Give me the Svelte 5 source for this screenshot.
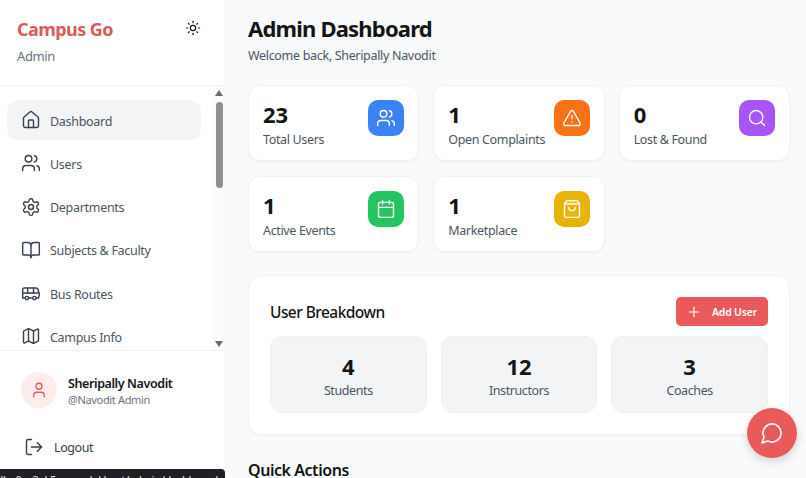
<script lang="ts">
const navItems = [
    { label: 'Dashboard', icon: 'home', active: true },
    { label: 'Users', icon: 'users' },
    { label: 'Departments', icon: 'gear' },
    { label: 'Subjects & Faculty', icon: 'book' },
    { label: 'Bus Routes', icon: 'bus' },
    { label: 'Campus Info', icon: 'map' },
];

const stats = [
    { value: 23, label: 'Total Users', color: '#3b82f6', icon: 'users' },
    { value: 1, label: 'Open Complaints', color: '#f97316', icon: 'alert' },
    { value: 0, label: 'Lost & Found', color: '#a855f7', icon: 'search' },
    { value: 1, label: 'Active Events', color: '#22c55e', icon: 'calendar' },
    { value: 1, label: 'Marketplace', color: '#eab308', icon: 'bag' },
];

const breakdown = [
    { value: 4, label: 'Students' },
    { value: 12, label: 'Instructors' },
    { value: 3, label: 'Coaches' },
];
</script>

{#snippet icon(name: string, size: number)}
    <svg width={size} height={size} viewBox="0 0 24 24" fill="none" stroke="currentColor" stroke-width="2" stroke-linecap="round" stroke-linejoin="round">
        {#if name === 'home'}
            <path d="M15 21v-8a1 1 0 0 0-1-1h-4a1 1 0 0 0-1 1v8" />
            <path d="M3 10a2 2 0 0 1 .709-1.528l7-5.999a2 2 0 0 1 2.582 0l7 5.999A2 2 0 0 1 21 10v9a2 2 0 0 1-2 2H5a2 2 0 0 1-2-2z" />
        {:else if name === 'users'}
            <path d="M16 21v-2a4 4 0 0 0-4-4H6a4 4 0 0 0-4 4v2" />
            <circle cx="9" cy="7" r="4" />
            <path d="M22 21v-2a4 4 0 0 0-3-3.87" />
            <path d="M16 3.13a4 4 0 0 1 0 7.75" />
        {:else if name === 'gear'}
            <path d="M12.22 2h-.44a2 2 0 0 0-2 2v.18a2 2 0 0 1-1 1.73l-.43.25a2 2 0 0 1-2 0l-.15-.08a2 2 0 0 0-2.73.73l-.22.38a2 2 0 0 0 .73 2.73l.15.1a2 2 0 0 1 1 1.72v.51a2 2 0 0 1-1 1.74l-.15.09a2 2 0 0 0-.73 2.73l.22.38a2 2 0 0 0 2.73.73l.15-.08a2 2 0 0 1 2 0l.43.25a2 2 0 0 1 1 1.73V20a2 2 0 0 0 2 2h.44a2 2 0 0 0 2-2v-.18a2 2 0 0 1 1-1.73l.43-.25a2 2 0 0 1 2 0l.15.08a2 2 0 0 0 2.73-.73l.22-.39a2 2 0 0 0-.73-2.73l-.15-.08a2 2 0 0 1-1-1.74v-.5a2 2 0 0 1 1-1.74l.15-.09a2 2 0 0 0 .73-2.73l-.22-.38a2 2 0 0 0-2.73-.73l-.15.08a2 2 0 0 1-2 0l-.43-.25a2 2 0 0 1-1-1.73V4a2 2 0 0 0-2-2z" />
            <circle cx="12" cy="12" r="3" />
        {:else if name === 'book'}
            <path d="M12 7v14" />
            <path d="M3 18a1 1 0 0 1-1-1V4a1 1 0 0 1 1-1h5a4 4 0 0 1 4 4 4 4 0 0 1 4-4h5a1 1 0 0 1 1 1v13a1 1 0 0 1-1 1h-6a3 3 0 0 0-3 3 3 3 0 0 0-3-3z" />
        {:else if name === 'bus'}
            <path d="M8 6v6" />
            <path d="M15 6v6" />
            <path d="M2 12h19.6" />
            <path d="M18 18h3s.5-1.7.8-2.8c.1-.4.2-.8.2-1.2 0-.4-.1-.8-.2-1.2l-1.4-5C20.1 6.8 19.1 6 18 6H4a2 2 0 0 0-2 2v10h3" />
            <circle cx="7" cy="18" r="2" />
            <path d="M9 18h5" />
            <circle cx="16" cy="18" r="2" />
        {:else if name === 'map'}
            <path d="M14.106 5.553a2 2 0 0 0 1.788 0l3.659-1.83A1 1 0 0 1 21 4.619v12.764a1 1 0 0 1-.553.894l-4.553 2.277a2 2 0 0 1-1.788 0l-4.212-2.106a2 2 0 0 0-1.788 0l-3.659 1.83A1 1 0 0 1 3 19.381V6.618a1 1 0 0 1 .553-.894l4.553-2.277a2 2 0 0 1 1.788 0z" />
            <path d="M15 5.764v15" />
            <path d="M9 3.236v15" />
        {:else if name === 'alert'}
            <path d="m21.73 18-8-14a2 2 0 0 0-3.48 0l-8 14A2 2 0 0 0 4 21h16a2 2 0 0 0 1.73-3" />
            <path d="M12 9v4" />
            <path d="M12 17h.01" />
        {:else if name === 'search'}
            <circle cx="11" cy="11" r="8" />
            <path d="m21 21-4.3-4.3" />
        {:else if name === 'calendar'}
            <path d="M8 2v4" />
            <path d="M16 2v4" />
            <rect width="18" height="18" x="3" y="4" rx="2" />
            <path d="M3 10h18" />
        {:else if name === 'bag'}
            <path d="M6 2 3 6v14a2 2 0 0 0 2 2h14a2 2 0 0 0 2-2V6l-3-4Z" />
            <path d="M3 6h18" />
            <path d="M16 10a4 4 0 0 1-8 0" />
        {:else if name === 'user'}
            <path d="M19 21v-2a4 4 0 0 0-4-4H9a4 4 0 0 0-4 4v2" />
            <circle cx="12" cy="7" r="4" />
        {:else if name === 'logout'}
            <path d="M9 21H5a2 2 0 0 1-2-2V5a2 2 0 0 1 2-2h4" />
            <path d="m16 17 5-5-5-5" />
            <path d="M21 12H9" />
        {:else if name === 'sun'}
            <circle cx="12" cy="12" r="4" />
            <path d="M12 2v2" />
            <path d="M12 20v2" />
            <path d="m4.93 4.93 1.41 1.41" />
            <path d="m17.66 17.66 1.41 1.41" />
            <path d="M2 12h2" />
            <path d="M20 12h2" />
            <path d="m6.34 17.66-1.41 1.41" />
            <path d="m19.07 4.93-1.41 1.41" />
        {:else if name === 'plus'}
            <path d="M5 12h14" />
            <path d="M12 5v14" />
        {:else if name === 'chat'}
            <path d="M7.9 20A9 9 0 1 0 4 16.1L2 22Z" />
        {/if}
    </svg>
{/snippet}

<div class="layout">
    <aside class="sidebar">
        <header class="brand">
            <div>
                <h2>Campus Go</h2>
                <p>Admin</p>
            </div>
            <button class="theme-toggle" aria-label="Toggle theme">{@render icon('sun', 16)}</button>
        </header>

        <div class="nav-wrap">
            <nav class="nav">
                {#each navItems as item}
                    <a class="nav-item" class:active={item.active} href="#top">
                        {@render icon(item.icon, 20)}
                        <span>{item.label}</span>
                    </a>
                {/each}
            </nav>
            <div class="scrollbar">
                <span class="arrow up"></span>
                <span class="track"><span class="thumb"></span></span>
                <span class="arrow down"></span>
            </div>
        </div>

        <div class="profile">
            <div class="user">
                <span class="avatar">{@render icon('user', 18)}</span>
                <div>
                    <div class="user-name">Sheripally Navodit</div>
                    <div class="user-handle">@Navodit Admin</div>
                </div>
            </div>
            <a class="logout" href="#top">
                {@render icon('logout', 20)}
                <span>Logout</span>
            </a>
        </div>
    </aside>

    <main class="main">
        <h1>Admin Dashboard</h1>
        <p class="welcome">Welcome back, Sheripally Navodit</p>

        <section class="stats">
            {#each stats as stat}
                <div class="card stat">
                    <div>
                        <div class="stat-value">{stat.value}</div>
                        <div class="stat-label">{stat.label}</div>
                    </div>
                    <span class="stat-icon" style="background:{stat.color}">{@render icon(stat.icon, 20)}</span>
                </div>
            {/each}
        </section>

        <section class="card panel">
            <div class="panel-head">
                <h3>User Breakdown</h3>
                <button class="add-user">{@render icon('plus', 16)}<span>Add User</span></button>
            </div>
            <div class="breakdown">
                {#each breakdown as item}
                    <div class="tile">
                        <div class="tile-value">{item.value}</div>
                        <div class="tile-label">{item.label}</div>
                    </div>
                {/each}
            </div>
        </section>

        <h3 class="quick">Quick Actions</h3>
    </main>

    <button class="chat" aria-label="Open chat">{@render icon('chat', 24)}</button>
    <div class="status-url">dlg-0ca3ak5.w.modal.host/admin/dashboard</div>
</div>

<style>
    :global(body) {
        margin: 0;
        font-family: "Noto Sans", "Open Sans", sans-serif;
        color: #141414;
        background: #f9fafb;
    }

    h1, h2, h3, p {
        margin: 0;
    }

    svg {
        stroke-width: 1.7;
    }

    .layout {
        display: flex;
        height: 478px;
        overflow: hidden;
        position: relative;
    }

    .sidebar {
        width: 225px;
        flex: none;
        display: flex;
        flex-direction: column;
        background: #fff;
        border-right: 1px solid #f3f4f6;
    }

    .brand {
        height: 86px;
        flex: none;
        box-sizing: border-box;
        padding: 17px 24px 0 17px;
        display: flex;
        justify-content: space-between;
        align-items: flex-start;
        border-bottom: 1px solid #f0f1f3;
    }

    .brand h2 {
        font-size: 18px;
        line-height: 24px;
        font-weight: 700;
        letter-spacing: -0.55px;
        color: #dc5a5a;
    }

    .brand p {
        margin-top: 6px;
        font-size: 13px;
        line-height: 18px;
        letter-spacing: -0.4px;
        color: #6b7280;
    }

    .theme-toggle {
        border: 0;
        background: none;
        padding: 0;
        margin-top: 3px;
        display: flex;
        color: #141414;
    }

    .nav-wrap {
        height: 264px;
        flex: none;
        display: flex;
        overflow: hidden;
    }

    .nav {
        flex: 1;
        padding: 14px 12px 0 7px;
        display: flex;
        flex-direction: column;
        gap: 3.3px;
    }

    .nav-item {
        height: 40px;
        flex: none;
        padding-left: 14px;
        display: flex;
        align-items: center;
        gap: 9px;
        border-radius: 12px;
        font-size: 12.5px;
        letter-spacing: -0.3px;
        color: #4b5563;
        text-decoration: none;
    }

    .nav-item span {
        padding-top: 2px;
    }

    .nav-item svg {
        flex: none;
        color: #374151;
    }

    .nav-item.active {
        background: #f3f4f6;
    }

    .scrollbar {
        width: 12px;
        flex: none;
        background: #fbfbfb;
        display: flex;
        flex-direction: column;
        align-items: center;
    }

    .arrow {
        width: 0;
        height: 0;
        flex: none;
        border-left: 4.5px solid transparent;
        border-right: 4.5px solid transparent;
    }

    .arrow.up {
        margin-top: 4px;
        border-bottom: 6px solid #6b6b6b;
    }

    .arrow.down {
        margin-bottom: 3px;
        border-top: 6px solid #6b6b6b;
    }

    .track {
        flex: 1;
        width: 100%;
        display: flex;
        justify-content: center;
        padding-top: 6px;
    }

    .thumb {
        width: 7px;
        height: 86px;
        border-radius: 4px;
        background: #8f8f8f;
    }

    .profile {
        flex: 1;
        border-top: 1px solid #f0f1f3;
        padding: 21px 20px 0 21px;
    }

    .user {
        display: flex;
        align-items: center;
        gap: 11px;
    }

    .avatar {
        width: 36px;
        height: 36px;
        border-radius: 50%;
        background: #fdecec;
        color: #e25c5c;
        display: flex;
        align-items: center;
        justify-content: center;
    }

    .user-name {
        font-size: 12.5px;
        line-height: 17px;
        font-weight: 600;
        letter-spacing: -0.4px;
        padding-top: 2px;
        color: #141414;
    }

    .user-handle {
        font-size: 11px;
        line-height: 15px;
        letter-spacing: -0.35px;
        color: #6b7280;
    }

    .logout {
        margin-top: 29px;
        padding-left: 3px;
        display: flex;
        align-items: center;
        gap: 10px;
        font-size: 12.5px;
        letter-spacing: -0.4px;
        color: #374151;
        text-decoration: none;
    }

    .main {
        flex: 1;
        min-width: 0;
        padding: 13px 16px 0 22px;
        background: #f9fafb;
    }

    h1 {
        font-size: 22px;
        line-height: 30px;
        font-weight: 700;
        letter-spacing: -0.8px;
        color: #141414;
    }

    .welcome {
        margin-top: 4px;
        font-size: 12.5px;
        line-height: 17px;
        letter-spacing: -0.32px;
        color: #4b5563;
    }

    .card {
        background: #fff;
        border: 1px solid #f1f2f4;
        box-sizing: border-box;
        box-shadow: 0 1px 2px rgba(0, 0, 0, 0.04);
    }

    .stats {
        margin-top: 21px;
        display: grid;
        grid-template-columns: repeat(3, 1fr);
        column-gap: 14px;
        row-gap: 15px;
    }

    .stat {
        height: 76px;
        border-radius: 12px;
        padding: 13px 14px 0 14px;
        display: flex;
        justify-content: space-between;
        align-items: flex-start;
    }

    .stat-value {
        font-size: 22px;
        line-height: 30px;
        font-weight: 700;
        color: #141414;
    }

    .stat-label {
        margin-top: 2px;
        font-size: 12.5px;
        line-height: 17px;
        letter-spacing: -0.35px;
        color: #4b5563;
    }

    .stat-icon {
        width: 36px;
        height: 36px;
        margin-top: 1px;
        flex: none;
        border-radius: 10px;
        color: #fff;
        display: flex;
        align-items: center;
        justify-content: center;
    }

    .panel {
        margin-top: 23px;
        height: 160px;
        border-radius: 14px;
        padding: 21px 21px 0;
    }

    .panel-head {
        display: flex;
        justify-content: space-between;
        align-items: center;
        height: 29px;
    }

    .panel-head h3 {
        font-size: 15.5px;
        font-weight: 500;
        letter-spacing: -0.55px;
        color: #141414;
    }

    .add-user {
        height: 29px;
        padding: 0 11px 0 10px;
        display: flex;
        align-items: center;
        gap: 10px;
        border: 0;
        border-radius: 5px;
        background: #ea5a5a;
        color: #fff;
        font: 600 10.5px "Noto Sans", sans-serif;
        letter-spacing: -0.2px;
    }

    .breakdown {
        margin-top: 10px;
        display: grid;
        grid-template-columns: repeat(3, 1fr);
        gap: 14px;
    }

    .tile {
        height: 77px;
        box-sizing: border-box;
        border: 1px solid #eff0f2;
        border-radius: 12px;
        background: #f3f4f6;
        padding-top: 14px;
        text-align: center;
    }

    .tile-value {
        font-size: 22px;
        line-height: 30px;
        font-weight: 700;
        color: #141414;
    }

    .tile-label {
        margin-top: 1px;
        font-size: 12.5px;
        line-height: 17px;
        letter-spacing: -0.4px;
        color: #4b5563;
    }

    .quick {
        margin-top: 24px;
        font-size: 16px;
        line-height: 22px;
        font-weight: 600;
        letter-spacing: -0.45px;
        color: #141414;
    }

    .chat {
        position: absolute;
        left: 747px;
        top: 408px;
        width: 50px;
        height: 50px;
        padding: 0;
        border: 0;
        border-radius: 50%;
        background: #ea5a5a;
        color: #fff;
        display: flex;
        align-items: center;
        justify-content: center;
        box-shadow: 0 4px 10px rgba(0, 0, 0, 0.15);
    }

    .status-url {
        position: absolute;
        left: 0;
        top: 469px;
        width: 225px;
        height: 20px;
        box-sizing: border-box;
        padding: 4px 7px 0 0;
        background: #202124;
        border-radius: 0 4px 0 0;
        color: #e5e7eb;
        font-size: 11px;
        line-height: 14px;
        letter-spacing: -0.25px;
        white-space: nowrap;
        overflow: hidden;
        direction: rtl;
        text-align: left;
    }
</style>
